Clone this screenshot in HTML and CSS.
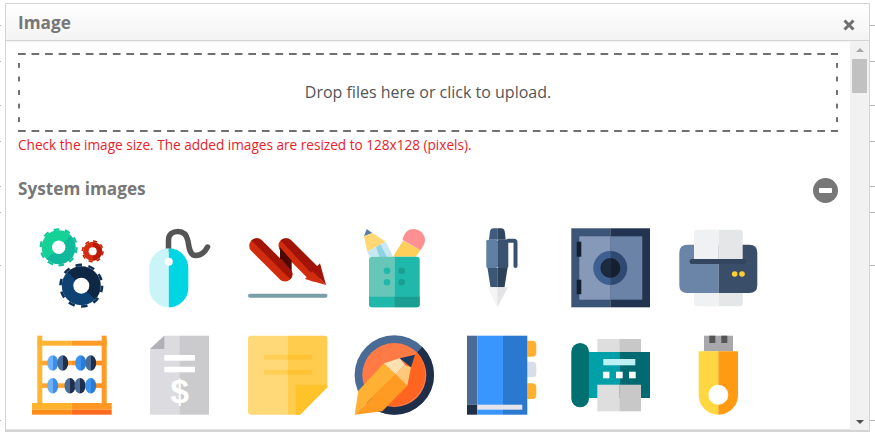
FILE: index.html
```html
<!DOCTYPE html>
<html>
<head>
<meta charset="UTF-8">
<title>Image</title>
<link rel="stylesheet" href="styles.css">
</head>
<body>
<div class="dialog">
	<div class="dialog-head">
		<h3 class="dialog-title">Image</h3>
		<svg class="close-icon" width="12" height="12" viewBox="0 0 12 12"><path d="M1.5 1.5 10.5 10.5M10.5 1.5 1.5 10.5" stroke="#6f6f6f" stroke-width="3" fill="none"/></svg>
	</div>
	<div class="dialog-body">
		<div class="content">
			<div class="dropzone">Drop files here or click to upload.</div>
			<p class="size-note">Check the image size. The added images are resized to 128x128 (pixels).</p>
			<div class="section-head">
				<h4 class="section-title">System images</h4>
				<span class="minus-btn"><span class="minus-bar"></span></span>
			</div>
			<div class="icon-grid">
				<!-- gears -->
				<svg class="icon" viewBox="0 0 80 80">
					<defs>
						<linearGradient id="beadLight" x1="0" x2="1" y1="0" y2="0"><stop offset=".5" stop-color="#6fb1f7"/><stop offset=".5" stop-color="#3b8fea"/></linearGradient>
						<linearGradient id="beadBlue" x1="0" x2="1" y1="0" y2="0"><stop offset=".5" stop-color="#3b93f0"/><stop offset=".5" stop-color="#2a7cd8"/></linearGradient>
						<linearGradient id="beadDark" x1="0" x2="1" y1="0" y2="0"><stop offset=".5" stop-color="#4a6c98"/><stop offset=".5" stop-color="#20304c"/></linearGradient>
						<linearGradient id="gearGreen" x1="0" x2="1" y1="0" y2="1"><stop offset=".5" stop-color="#14d196"/><stop offset=".5" stop-color="#10b89c"/></linearGradient>
						<linearGradient id="gearRed" x1="0" x2="1" y1="0" y2="0"><stop offset=".5" stop-color="#d62c10"/><stop offset=".5" stop-color="#b81c08"/></linearGradient>
						<linearGradient id="gearNavy" x1="0" x2="1" y1="1" y2="0"><stop offset=".5" stop-color="#0e4272"/><stop offset=".5" stop-color="#0d2744"/></linearGradient>
					</defs>
					<circle cx="26.7" cy="19.3" r="18" fill="none" stroke="#12c49a" stroke-width="2.2" stroke-dasharray="5.65 5.66"/>
					<circle cx="26.7" cy="19.3" r="17" fill="url(#gearGreen)"/>
					<circle cx="26.7" cy="19.3" r="6.7" fill="#fff"/>
					<circle cx="60.7" cy="23.3" r="10.3" fill="none" stroke="#c8240c" stroke-width="1.6" stroke-dasharray="4.05 4.04"/>
					<circle cx="60.7" cy="23.3" r="9.6" fill="url(#gearRed)"/>
					<circle cx="60.7" cy="23.3" r="4" fill="#fff"/>
					<circle cx="49.3" cy="57.7" r="20.8" fill="none" stroke="#0e3159" stroke-width="2.6" stroke-dasharray="6.53 6.54"/>
					<circle cx="49.3" cy="57.7" r="19.5" fill="url(#gearNavy)"/>
					<circle cx="49.3" cy="57.7" r="8" fill="#fff"/>
				</svg>
				<!-- mouse -->
				<svg class="icon" viewBox="0 0 80 80">
					<path d="M28.5 21V12C28.5 6 33 3.5 38 3.5 44 3.5 47 8 48 13 49 20 50 27.5 55.5 27.5 61 27.5 65 24 67.5 19" fill="none" stroke="#555" stroke-width="5.5" stroke-linecap="round"/>
					<path d="M28.8 20.3C18 20.3 9.3 29 9.3 40V60C9.3 70.5 18 79.3 28.8 79.3Z" fill="#c9f5f9"/>
					<path d="M28.8 20.3C39.5 20.3 48.3 29 48.3 40V60C48.3 70.5 39.5 79.3 28.8 79.3Z" fill="#00d5e3"/>
					<circle cx="28.8" cy="33.7" r="4" fill="#fff"/>
				</svg>
				<!-- down trend arrow -->
				<svg class="icon" viewBox="0 0 80 80">
					<path d="M8.7 17.7 37 46" stroke="#d22c0e" stroke-width="15" stroke-linecap="round"/>
					<path d="M3.4 12.4A7.5 7.5 0 0 1 14 12.4L42.3 40.7A7.5 7.5 0 0 1 42.3 51.3Z" fill="#a11407"/>
					<path d="M38 17.7 66 46" stroke="#d22c0e" stroke-width="15" stroke-linecap="round"/>
					<path d="M32.7 12.4A7.5 7.5 0 0 1 43.3 12.4L72 41 65 47Z" fill="#a11407"/>
					<path d="M32 19.3 43.7 32.7V42.7L32 30.3Z" fill="#4f0704"/>
					<path d="M57 51 78 57 64.5 43Z" fill="#d22c0e"/>
					<path d="M72 35.3 78 57 64.5 43Z" fill="#a11407"/>
					<path d="M2 67.7H77.5" stroke="#7a9fa7" stroke-width="4" stroke-linecap="round"/>
				</svg>
				<!-- pencil cup -->
				<svg class="icon" viewBox="0 0 80 80">
					<path d="M9 8.3 11.7 1 17.3 5Z" fill="#5a7ba8"/>
					<path d="M9 8.3 17.3 5 30.7 13.7 12.3 23.7Z" fill="#ffd873"/>
					<path d="M12.3 23.7 30.7 13.7 38 28.7H14.7Z" fill="#c6e8f2"/>
					<path d="M21 19 25.5 16.5 32 29H24.5Z" fill="#8fd4e4"/>
					<path d="M38 28.7 48 12.7 65.7 21.7 60.7 28.7Z" fill="#ffcf5c"/>
					<path d="M47.5 12C49 4 54 1 58.5 1 65 1 70 6 70 12 70 15 68 19 65.5 22Z" fill="#ff9092"/>
					<path d="M39.3 28.7H17Q14 28.7 14 31.7V76.3Q14 79.3 17 79.3H39.3Z" fill="#66c6b8"/>
					<path d="M39.3 28.7H61.7Q64.7 28.7 64.7 31.7V76.3Q64.7 79.3 61.7 79.3H39.3Z" fill="#20b8aa"/>
					<path d="M14 68.7H39.3V79.3H17Q14 79.3 14 76.3Z" fill="#20b8aa"/>
					<path d="M39.3 68.7H64.7V76.3Q64.7 79.3 61.7 79.3H39.3Z" fill="#1a9e92"/>
					<circle cx="32" cy="42.7" r="3.3" fill="#20b8aa"/><circle cx="32" cy="54.3" r="3.3" fill="#20b8aa"/>
					<circle cx="46.7" cy="42.7" r="3.3" fill="#1a9e92"/><circle cx="46.7" cy="54.3" r="3.3" fill="#1a9e92"/>
				</svg>
				<!-- pen -->
				<svg class="icon" viewBox="0 0 80 80">
					<path d="M45 12.7H51Q52.5 12.7 52.5 14.2V38" fill="none" stroke="#3a5170" stroke-width="4" stroke-linecap="round"/>
					<path d="M26 11.7 27 3Q27.5 .3 30 .3H34.3V11.7Z" fill="#3f5c7f"/>
					<path d="M42.7 11.7 41.7 3Q41 .3 38.5 .3H34.3V11.7Z" fill="#2f4660"/>
					<rect x="23.3" y="11.7" width="11" height="28.3" rx="1.5" fill="#5f7fa3"/>
					<rect x="34.3" y="11.7" width="11" height="28.3" rx="1.5" fill="#3a5170"/>
					<path d="M24.5 40H34.3V59.3H27.5Z" fill="#3b5776"/>
					<path d="M44.5 40H34.3V59.3H41.5Z" fill="#2c425a"/>
					<path d="M24.5 59.3H34.3V79.3Z" fill="#f4f4f4"/>
					<path d="M45 59.3H34.3V79.3Z" fill="#e4e4e6"/>
				</svg>
				<!-- safe -->
				<svg class="icon" viewBox="0 0 80 80">
					<rect x=".3" y=".3" width="39" height="79" fill="#3a5578"/>
					<rect x="39.3" y=".3" width="39.7" height="79" fill="#213350"/>
					<rect x="8.3" y="8.3" width="31" height="63.4" fill="#8699b8"/>
					<rect x="39.3" y="8.3" width="32" height="63.4" fill="#6a83a6"/>
					<rect x="5.7" y="13.7" width="4.6" height="15" fill="#14202f"/>
					<rect x="5.7" y="51.7" width="4.6" height="14.5" fill="#14202f"/>
					<path d="M39.3 23A17 17 0 0 0 39.3 57Z" fill="#3e5f91"/>
					<path d="M39.3 23A17 17 0 0 1 39.3 57Z" fill="#2e4a73"/>
					<path d="M39.3 30A10 10 0 0 0 39.3 50Z" fill="#1c2a3f"/>
					<path d="M39.3 30A10 10 0 0 1 39.3 50Z" fill="#151f30"/>
				</svg>
				<!-- printer -->
				<svg class="icon" viewBox="0 0 80 80">
					<path d="M15 60H39.7V78.3H18Q15 78.3 15 75.3Z" fill="#f0f1f2"/>
					<path d="M63.7 60H39.7V78.3H60.7Q63.7 78.3 63.7 75.3Z" fill="#e4e6e8"/>
					<path d="M39.7 16.7H8.3Q.3 16.7 .3 24.7V57Q.3 65 8.3 65H39.7Z" fill="#6a85a8"/>
					<path d="M39.7 16.7H70.3Q78.3 16.7 78.3 24.7V57Q78.3 65 70.3 65H39.7Z" fill="#3a4e6a"/>
					<path d="M15 31V4.7Q15 1.7 18 1.7H39.7V31Z" fill="#f0f1f2"/>
					<path d="M63.7 31V4.7Q63.7 1.7 60.7 1.7H39.7V31Z" fill="#e4e6e8"/>
					<path d="M13 33.5H65" stroke="#34465f" stroke-width="5" stroke-linecap="round"/>
					<circle cx="55.7" cy="46" r="2.8" fill="#ffcf33"/><circle cx="63" cy="46" r="2.8" fill="#ffcf33"/>
				</svg>
				<!-- abacus -->
				<svg class="icon" viewBox="0 0 80 80">
					<rect x="5.3" y=".7" width="5" height="68" fill="#ffb433"/>
					<rect x="69.7" y=".7" width="5" height="68" fill="#ff9a26"/>
					<rect x="5.3" y="5.7" width="34.4" height="5" fill="#ffb433"/>
					<rect x="39.7" y="5.7" width="35" height="5" fill="#ff9a26"/>
					<rect x="10" y="25.7" width="30" height="4.6" fill="#ffa42e"/><rect x="40" y="25.7" width="30" height="4.6" fill="#ff8f20"/>
					<rect x="10" y="48.3" width="30" height="4.6" fill="#ffa42e"/><rect x="40" y="48.3" width="30" height="4.6" fill="#ff8f20"/>
					<ellipse cx="20.7" cy="28" rx="5.5" ry="7.7" fill="url(#beadLight)"/>
					<ellipse cx="30.7" cy="28" rx="5.5" ry="7.7" fill="url(#beadDark)"/>
					<ellipse cx="48.7" cy="28" rx="5.5" ry="7.7" fill="url(#beadBlue)"/>
					<ellipse cx="58.7" cy="28" rx="5.5" ry="7.7" fill="url(#beadDark)"/>
					<ellipse cx="20.7" cy="50.7" rx="5.5" ry="7.7" fill="url(#beadLight)"/>
					<ellipse cx="38" cy="50.7" rx="5.5" ry="7.7" fill="url(#beadDark)"/>
					<ellipse cx="48" cy="50.7" rx="5.5" ry="7.7" fill="url(#beadDark)"/>
					<ellipse cx="58.7" cy="50.7" rx="5.5" ry="7.7" fill="url(#beadBlue)"/>
					<rect x="0" y="68" width="39.7" height="6.7" fill="#ffb32d"/><rect x="39.7" y="68" width="40" height="6.7" fill="#ff9822"/>
					<rect x="0" y="74.7" width="39.7" height="5" fill="#ff8c1a"/><rect x="39.7" y="74.7" width="40" height="5" fill="#ff6a1c"/>
				</svg>
				<!-- invoice -->
				<svg class="icon" viewBox="0 0 80 80">
					<path d="M24.3 .7H39.3V79.7H10V14Z" fill="#dcdce0"/>
					<rect x="39.3" y=".7" width="29.7" height="79" fill="#cbcbce"/>
					<path d="M24.3 .7V14H10Z" fill="#b0b0b8"/>
					<rect x="24.3" y="20" width="30.7" height="5.7" fill="#fff"/>
					<rect x="24.3" y="31.7" width="30.7" height="5.6" fill="#fff"/>
					<text class="dollar" x="39.6" y="68" text-anchor="middle">$</text>
				</svg>
				<!-- sticky note -->
				<svg class="icon" viewBox="0 0 80 80">
					<path d="M39.3 .7H3Q0 .7 0 3.7V76.7Q0 79.7 3 79.7H39.3Z" fill="#ffd977"/>
					<path d="M39.3 .7H76.3Q79.3 .7 79.3 3.7V52.3L52 79.7H39.3Z" fill="#ffcc4d"/>
					<rect x="16" y="19.7" width="23.3" height="5" fill="#ffcf55"/><rect x="39.3" y="19.7" width="24.4" height="5" fill="#ffc233"/>
					<rect x="16" y="34.7" width="23.3" height="5" fill="#ffcf55"/><rect x="39.3" y="34.7" width="24.4" height="5" fill="#ffc233"/>
					<path d="M47.7 49.7H79.3V52.3L52 79.7H47.7Z" fill="#ffc229"/>
				</svg>
				<!-- pencil badge -->
				<svg class="icon" viewBox="0 0 80 80">
					<circle cx="39.3" cy="40" r="39.7" fill="#4a6b96"/>
					<path d="M67.4 11.9A39.7 39.7 0 0 1 11.2 68.1Z" fill="#1f2f4a"/>
					<circle cx="39.3" cy="40" r="32" fill="#ff7a45"/>
					<path d="M61.9 17.4A32 32 0 0 1 16.7 62.6Z" fill="#ff6420"/>
					<path d="M-.3 79.7 3.3 55.7 29 28.3 40.7 39.5Z" fill="#ffb133"/>
					<path d="M-.3 79.7 40.7 39.5 52.3 50.7 27.3 76.3Z" fill="#ff9a22"/>
					<path d="M29 28.3 44.7 23.3 50 30 40.7 39.5Z" fill="#ffe0b0"/>
					<path d="M40.7 39.5 50 30 56 32.3 52.3 50.7Z" fill="#ffc97a"/>
					<path d="M44.7 23.3 60 19.7 56 32.3Z" fill="#1f3a5c"/>
				</svg>
				<!-- address book -->
				<svg class="icon" viewBox="0 0 80 80">
					<path d="M64.3 5.7H69.3Q73.3 5.7 73.3 9.7V17.7Q73.3 21.7 69.3 21.7H64.3Z" fill="#ffb02e"/>
					<path d="M64.3 26.7H69.3Q73.3 26.7 73.3 30.7V38.3Q73.3 42.3 69.3 42.3H64.3Z" fill="#d8dde8"/>
					<path d="M64.3 48.3H69.3Q73.3 48.3 73.3 52.3V60Q73.3 64 69.3 64H64.3Z" fill="#ffb02e"/>
					<rect x="4" y=".7" width="10.3" height="69" fill="#4a6b96"/>
					<rect x="4" y="69.7" width="10.3" height="10" fill="#1f2f48"/>
					<rect x="14.3" y=".7" width="25.7" height="79" fill="#3a96ff"/>
					<rect x="40" y=".7" width="24.3" height="79" fill="#2b78d0"/>
					<rect x="14.3" y="69.7" width="45" height="5" fill="#e4e4ea"/>
				</svg>
				<!-- fax -->
				<svg class="icon" viewBox="0 0 80 80">
					<rect x="26.3" y="4" width="22" height="20" fill="#dedede"/><rect x="48.3" y="4" width="21.7" height="20" fill="#c8c8c8"/>
					<rect x="14" y="17" width="34.3" height="46" fill="#00a0a8"/>
					<rect x="48.3" y="17" width="30.7" height="46" fill="#006a70"/>
					<rect x=".3" y="8" width="17.7" height="64.3" rx="8.8" fill="#007070"/>
					<rect x="26.3" y="49.7" width="22" height="26.6" fill="#dedede"/><rect x="48.3" y="49.7" width="21.7" height="26.6" fill="#c8c8c8"/>
					<rect x="32.3" y="24" width="32" height="6.3" fill="#bdf0f4"/>
					<rect x="32" y="36.7" width="6.4" height="6.6" fill="#fff"/><rect x="45" y="36.7" width="6.7" height="6.6" fill="#fff"/><rect x="58" y="36.7" width="6.7" height="6.6" fill="#fff"/>
				</svg>
				<!-- usb stick -->
				<svg class="icon" viewBox="0 0 80 80">
					<rect x="25" y=".7" width="29" height="15.6" fill="#a8a8ac"/>
					<rect x="30.3" y=".7" width="6" height="7.3" fill="#555"/><rect x="42.3" y=".7" width="6" height="7.3" fill="#555"/>
					<path d="M39.3 16.3H19.7V60C19.7 71 28.5 79.7 39.3 79.7Z" fill="#ffd740"/>
					<path d="M39.3 16.3H59V60C59 71 50 79.7 39.3 79.7Z" fill="#ff9a12"/>
					<circle cx="39.3" cy="59.7" r="10" fill="#fff"/>
				</svg>
			</div>
		</div>
		<div class="scrollbar">
			<span class="arrow-up"></span>
			<span class="thumb"></span>
			<span class="arrow-down"></span>
		</div>
	</div>
</div>
</body>
</html>
```

FILE: styles.css
```css
html,body{
	margin:0;
	height:100%;
}
body{
	font-family:"Open Sans","Noto Sans",sans-serif;
	background-color:#fff;
	/* table lines of the page behind the dialog */
	background-image:
		linear-gradient(#b5b5b5,#b5b5b5),linear-gradient(#b5b5b5,#b5b5b5),
		linear-gradient(#b5b5b5,#b5b5b5),linear-gradient(#b5b5b5,#b5b5b5),
		linear-gradient(#b5b5b5,#b5b5b5),linear-gradient(#b5b5b5,#b5b5b5),
		linear-gradient(#b5b5b5,#b5b5b5),linear-gradient(#b5b5b5,#b5b5b5);
	background-repeat:no-repeat;
	background-size:875px 1px;
	background-position:0 25px,0 61px,0 105px,0 141px,0 186px,0 212px,0 265px,0 420px;
	overflow:hidden;
}
.dialog{
	box-sizing:border-box;
	width:865px;
	height:429px;
	margin-left:5px;
	position:relative;
	top:3px;
	border:1px solid #d4d4d4;
	border-bottom-width:2px;
	background:#fff;
	display:flex;
	flex-direction:column;
	box-shadow:-4px 0 0 #fff;
}
.dialog-head{
	height:36px;
	flex:none;
	display:flex;
	align-items:center;
	justify-content:space-between;
	padding:0 14px 0 12px;
	background:linear-gradient(#fff,#f3f3f3);
	border-bottom:1px solid #d4d4d4;
}
.dialog-title{
	margin:0;
	font-size:17.2px;
	font-weight:700;
	color:#777;
}
.close-icon{
	margin-top:6px;
}
.dialog-body{
	flex:1;
	display:flex;
	min-height:0;
}
.content{
	flex:1;
	min-width:0;
	padding:12px 12px 0;
	overflow:hidden;
	border-bottom:1px solid #e2e2e2;
	box-shadow:inset 0 2px 2px -1px #f0f0f0;
}
.dropzone{
	box-sizing:border-box;
	height:79px;
	padding-bottom:2px;
	display:flex;
	align-items:center;
	justify-content:center;
	font-size:16px;
	color:#555;
	background-image:
		linear-gradient(90deg,#707070 8px,transparent 8px),
		linear-gradient(90deg,#707070 8px,transparent 8px),
		linear-gradient(#707070 5px,transparent 5px),
		linear-gradient(#707070 5px,transparent 5px);
	background-size:13.55px 2px,13.55px 2px,2px 13.55px,2px 13.55px;
	background-repeat:repeat-x,repeat-x,repeat-y,repeat-y;
	background-position:0 0,0 100%,0 10px,100% 10px;
}
.size-note{
	margin:5px 0 0;
	font-size:13.6px;
	line-height:16px;
	color:#e8222a;
}
.section-head{
	display:flex;
	align-items:center;
	justify-content:space-between;
	margin-top:22px;
	height:26px;
}
.section-title{
	margin:0;
	font-size:17.2px;
	font-weight:700;
	color:#777;
}
.minus-btn{
	width:25px;
	height:25px;
	margin-top:4px;
	border-radius:50%;
	background:#777;
	display:flex;
	align-items:center;
	justify-content:center;
}
.minus-bar{
	width:13px;
	height:5px;
	border-radius:1px;
	background:#fff;
}
.icon-grid{
	display:grid;
	grid-template-columns:repeat(7,80px);
	column-gap:27.8px;
	row-gap:27px;
	margin-top:27px;
	padding-left:14px;
}
.icon{
	display:block;
	width:80px;
	height:80px;
	overflow:visible;
}
.dollar{
	font-family:"Liberation Sans",sans-serif;
	font-weight:700;
	font-size:33px;
	fill:#fff;
}
.scrollbar{
	width:19px;
	flex:none;
	background:#f1f1f1;
	display:flex;
	flex-direction:column;
	align-items:center;
	padding-top:7px;
	box-sizing:border-box;
}
.arrow-up{
	width:0;
	height:0;
	border:4px solid transparent;
	border-top:0;
	border-bottom:4px solid #a6a6a6;
}
.thumb{
	width:15px;
	height:34px;
	margin-top:7px;
	background:#c1c1c1;
}
.arrow-down{
	width:0;
	height:0;
	margin-top:auto;
	margin-bottom:6px;
	border:4px solid transparent;
	border-bottom:0;
	border-top:4px solid #505050;
}
```
